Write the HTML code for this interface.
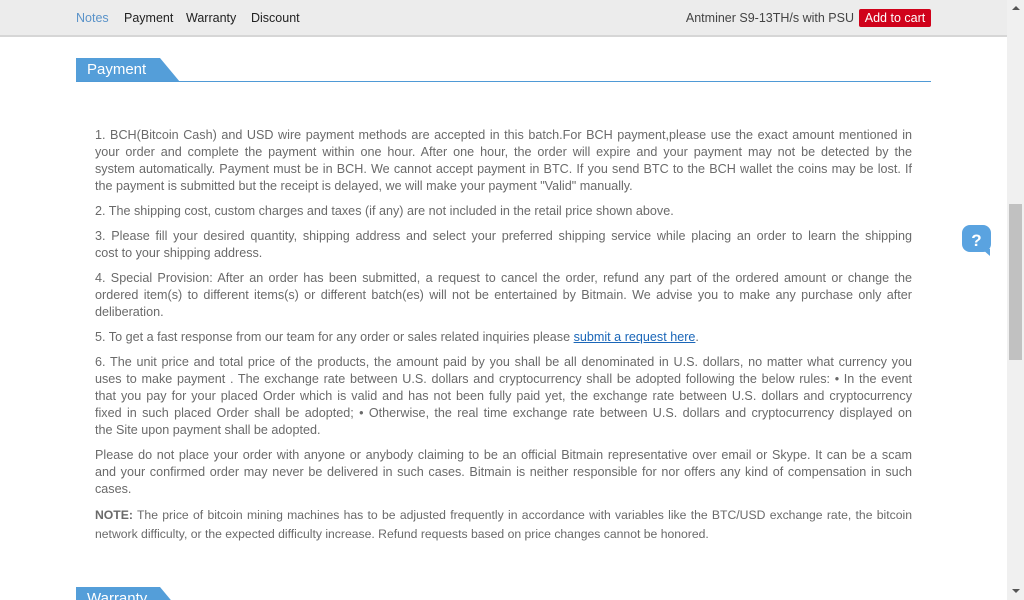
<!DOCTYPE html>
<html><head><meta charset="utf-8"><style>
*{margin:0;padding:0;box-sizing:border-box}
html,body{width:1024px;height:600px;overflow:hidden}
body{background:#fff;font-family:"Liberation Sans",sans-serif;position:relative}
.hdr{position:absolute;left:0;top:0;width:1007px;height:37px;background:#ececec;border-bottom:2px solid #d6d6d6}
.nav{position:absolute;top:11px;font-size:12.5px;color:#222}
.prod{position:absolute;right:153px;top:11px;font-size:12.5px;color:#444;white-space:nowrap}
.btn{position:absolute;left:859px;top:9px;width:72px;height:18px;background:#d0021b;color:#fff;font-size:12.5px;text-align:center;line-height:18px;border-radius:2px}
.sb{position:absolute;left:1007px;top:0;width:17px;height:600px;background:#f0f0f0}
.thumb{position:absolute;left:1009px;top:204px;width:13px;height:156px;background:#c1c1c1}
.tab{position:absolute;left:76px;height:25px;color:#fff;font-size:15px;line-height:24px;padding-left:11px}
.tab svg{position:absolute;left:0;top:0}
.tab span{position:relative}
.line{position:absolute;left:76px;top:81px;width:855px;height:1px;background:#4f9ad6}
.txt{position:absolute;left:95px;width:817px;font-size:12.6px;color:#6a6a6a}
.l{height:17px;line-height:17px;white-space:nowrap;text-align:justify;text-align-last:justify}
.e{text-align:left;text-align-last:left}
.p{margin-bottom:8px}
a{color:#1a66b8;text-decoration:underline}
.n .l{height:19px;line-height:19px}
</style></head><body>
<div class="hdr">
<div class="nav" style="left:76px;color:#5a93c9">Notes</div>
<div class="nav" style="left:124px">Payment</div>
<div class="nav" style="left:186px">Warranty</div>
<div class="nav" style="left:251px">Discount</div>
<div class="prod">Antminer S9-13TH/s with PSU</div>
<div class="btn">Add to cart</div>
</div>
<div class="sb"><div style="position:absolute;left:5px;top:6px;border:4px solid transparent;border-bottom:4px solid #555;border-top:0;width:0"></div><div style="position:absolute;left:5px;top:589px;border:4px solid transparent;border-top:4px solid #555;border-bottom:0;width:0"></div></div>
<div class="thumb"></div>
<div class="tab" style="top:58px;width:110px"><svg width="104" height="25"><polygon points="0,0 84,0 104,24 0,24" fill="#549ed9"/></svg><span>Payment</span></div>
<div class="line"></div>
<div class="tab" style="top:587px;width:110px"><svg width="104" height="25"><polygon points="0,0 84,0 104,24 0,24" fill="#549ed9"/></svg><span>Warranty</span></div>
<svg style="position:absolute;left:962px;top:225px" width="31" height="31"><rect x="0" y="0" width="29" height="27" rx="8" fill="#5aa3e0"/><polygon points="20,24 28,24 28,31" fill="#5aa3e0"/><text x="14.5" y="21" font-family="Liberation Sans" font-weight="bold" font-size="17" fill="#fff" text-anchor="middle">?</text></svg>
<div class="txt" style="top:127px">
<div class="p">
<div class="l">1. BCH(Bitcoin Cash) and USD wire payment methods are accepted in this batch.For BCH payment,please use the exact amount mentioned in</div>
<div class="l">your order and complete the payment within one hour. After one hour, the order will expire and your payment may not be detected by the</div>
<div class="l">system automatically. Payment must be in BCH. We cannot accept payment in BTC. If you send BTC to the BCH wallet the coins may be lost. If</div>
<div class="l e">the payment is submitted but the receipt is delayed, we will make your payment "Valid" manually.</div></div>
<div class="p"><div class="l e">2. The shipping cost, custom charges and taxes (if any) are not included in the retail price shown above.</div></div>
<div class="p"><div class="l">3. Please fill your desired quantity, shipping address and select your preferred shipping service while placing an order to learn the shipping</div>
<div class="l e">cost to your shipping address.</div></div>
<div class="p"><div class="l">4. Special Provision: After an order has been submitted, a request to cancel the order, refund any part of the ordered amount or change the</div>
<div class="l">ordered item(s) to different items(s) or different batch(es) will not be entertained by Bitmain. We advise you to make any purchase only after</div>
<div class="l e">deliberation.</div></div>
<div class="p"><div class="l e">5. To get a fast response from our team for any order or sales related inquiries please <a>submit a request here</a>.</div></div>
<div class="p"><div class="l">6. The unit price and total price of the products, the amount paid by you shall be all denominated in U.S. dollars, no matter what currency you</div>
<div class="l">uses to make payment . The exchange rate between U.S. dollars and cryptocurrency shall be adopted following the below rules: • In the event</div>
<div class="l">that you pay for your placed Order which is valid and has not been fully paid yet, the exchange rate between U.S. dollars and cryptocurrency</div>
<div class="l">fixed in such placed Order shall be adopted; • Otherwise, the real time exchange rate between U.S. dollars and cryptocurrency displayed on</div>
<div class="l e">the Site upon payment shall be adopted.</div></div>
<div class="p"><div class="l">Please do not place your order with anyone or anybody claiming to be an official Bitmain representative over email or Skype. It can be a scam</div>
<div class="l">and your confirmed order may never be delivered in such cases. Bitmain is neither responsible for nor offers any kind of compensation in such</div>
<div class="l e">cases.</div></div>
<div class="n" style="font-size:12.2px"><div class="l"><b>NOTE:</b> The price of bitcoin mining machines has to be adjusted frequently in accordance with variables like the BTC/USD exchange rate, the bitcoin</div>
<div class="l e">network difficulty, or the expected difficulty increase. Refund requests based on price changes cannot be honored.</div></div>
</div>
</body></html>
